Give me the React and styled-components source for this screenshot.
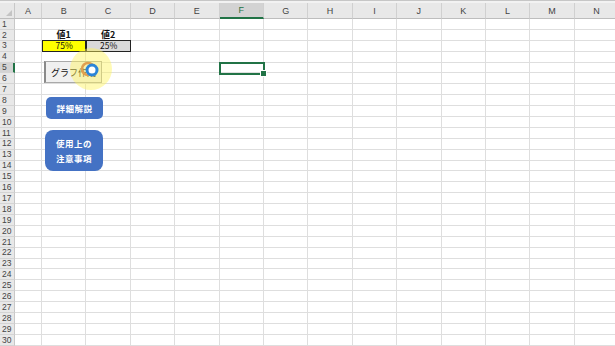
import React from 'react'
import styled, { createGlobalStyle } from 'styled-components'

const GlobalStyle = createGlobalStyle`
	html, body {
		margin: 0;
		padding: 0;
		background: #fff;
	}
	body {
		font-family: 'Noto Sans CJK JP', 'Liberation Sans', sans-serif;
	}
`

const COLS = ['A', 'B', 'C', 'D', 'E', 'F', 'G', 'H', 'I', 'J', 'K', 'L', 'M', 'N']
const ROWS = 30
const ACTIVE_COL = 'F'
const ACTIVE_ROW = 5

// cell contents keyed like "B2"
const cells = {
	B2: { text: '値1', bold: true },
	C2: { text: '値2', bold: true },
	B3: { text: '75%', fill: '#ffff00', boxed: true },
	C3: { text: '25%', fill: '#d9d9d9', boxed: true }
}

const Screen = styled.div`
	position: relative;
	width: 615px;
	height: 346px;
	overflow: hidden;
	background: #fff;
`

const TopStrip = styled.div`
	height: 3px;
	border-top: 1px solid #c6c6c6;
	background: #f2f2f2;
	box-sizing: border-box;
`

const Sheet = styled.div`
	display: grid;
	grid-template-columns: 15px 27px repeat(13, 44.4px);
	grid-template-rows: 16px repeat(${ROWS}, 10.9px);
	width: 620px;
`

const Corner = styled.div`
	position: relative;
	background: #e8e8e8;
	border-right: 1px solid #c8c8c8;
	border-bottom: 1px solid #bdbdbd;
	&::after {
		content: '';
		position: absolute;
		right: 2px;
		bottom: 2px;
		border-left: 6px solid transparent;
		border-bottom: 6px solid #c4c4c4;
	}
`

const ColHead = styled.div`
	display: flex;
	align-items: center;
	justify-content: center;
	background: ${p => (p.$active ? '#d3d3d3' : '#e8e8e8')};
	border-right: 1px solid #d0d0d0;
	border-bottom: ${p => (p.$active ? '2px solid #217346' : '1px solid #bdbdbd')};
	box-sizing: border-box;
	font-family: 'Liberation Sans', sans-serif;
	font-size: 9px;
	color: ${p => (p.$active ? '#217346' : '#444')};
`

const RowHead = styled.div`
	display: flex;
	align-items: center;
	padding-left: 2px;
	background: ${p => (p.$active ? '#d3d3d3' : '#e8e8e8')};
	border-right: ${p => (p.$active ? '2px solid #217346' : '1px solid #c8c8c8')};
	border-bottom: 1px solid #d4d4d4;
	box-sizing: border-box;
	font-family: 'Liberation Sans', sans-serif;
	font-size: 8.5px;
	color: #444;
	line-height: 1;
`

const Cell = styled.div`
	display: flex;
	align-items: center;
	justify-content: center;
	background: ${p => p.$fill || '#fff'};
	border-right: 1px solid ${p => (p.$boxed ? '#222' : '#dedede')};
	border-bottom: 1px solid ${p => (p.$boxed ? '#222' : '#dedede')};
	border-left: ${p => (p.$boxed ? '1px solid #222' : 'none')};
	border-top: ${p => (p.$boxed ? '1px solid #222' : 'none')};
	margin-top: ${p => (p.$boxed ? '-1px' : '0')};
	box-sizing: border-box;
	font-size: ${p => (p.$bold ? '9px' : '8.5px')};
	font-weight: ${p => (p.$bold ? 700 : 400)};
	color: #111;
	line-height: 1;
	white-space: nowrap;
`

const Selection = styled.div`
	position: absolute;
	left: 219px;
	top: 62px;
	width: 46px;
	height: 13px;
	border: 2px solid #217346;
	box-sizing: border-box;
	&::after {
		content: '';
		position: absolute;
		right: -4px;
		bottom: -4px;
		width: 5px;
		height: 5px;
		background: #217346;
		border: 1px solid #fff;
	}
`

const FormButton = styled.div`
	position: absolute;
	left: 44px;
	top: 61px;
	width: 58px;
	height: 22px;
	display: flex;
	align-items: center;
	padding-left: 5px;
	box-sizing: border-box;
	background: #f0f0f0;
	border: 1px solid #a9a9a9;
	border-left: 2px solid #8a8a8a;
	font-size: 9px;
	color: #111;
	white-space: nowrap;
`

const Shape = styled.div`
	position: absolute;
	left: ${p => p.$x}px;
	top: ${p => p.$y}px;
	width: ${p => p.$w}px;
	height: ${p => p.$h}px;
	display: flex;
	flex-direction: column;
	align-items: center;
	justify-content: center;
	gap: 6px;
	background: #4472c4;
	border-radius: ${p => p.$r}px;
	color: #fff;
	font-size: 8.5px;
	font-weight: 700;
	letter-spacing: 0.5px;
	line-height: 1;
`

const Pointer = styled.svg`
	position: absolute;
	left: 69px;
	top: 47px;
	pointer-events: none;
`

export default function App() {
	const rows = []
	for (let r = 1; r <= ROWS; r++) {
		rows.push(
			<React.Fragment key={r}>
				<RowHead $active={r === ACTIVE_ROW}>{r}</RowHead>
				{COLS.map(c => {
					const data = cells[`${c}${r}`] || {}
					return (
						<Cell key={c} $fill={data.fill} $bold={data.bold} $boxed={data.boxed}>
							{data.text}
						</Cell>
					)
				})}
			</React.Fragment>
		)
	}

	return (
		<Screen>
			<GlobalStyle />
			<TopStrip />
			<Sheet>
				<Corner />
				{COLS.map(c => (
					<ColHead key={c} $active={c === ACTIVE_COL}>
						{c}
					</ColHead>
				))}
				{rows}
			</Sheet>
			<Selection />
			<FormButton>グラフ作成</FormButton>
			<Pointer width="44" height="44" viewBox="0 0 44 44">
				<circle cx="22" cy="22" r="21" fill="#fff45a" opacity="0.45" />
				<circle cx="19" cy="22" r="6" fill="none" stroke="#e0a050" strokeWidth="2.5" />
				<circle cx="23" cy="23" r="5" fill="#fff" stroke="#2a85d8" strokeWidth="3" />
			</Pointer>
			<Shape $x={46} $y={97} $w={57} $h={22} $r={5}>
				詳細解説
			</Shape>
			<Shape $x={45} $y={130} $w={58} $h={41} $r={8}>
				<span>使用上の</span>
				<span>注意事項</span>
			</Shape>
		</Screen>
	)
}
